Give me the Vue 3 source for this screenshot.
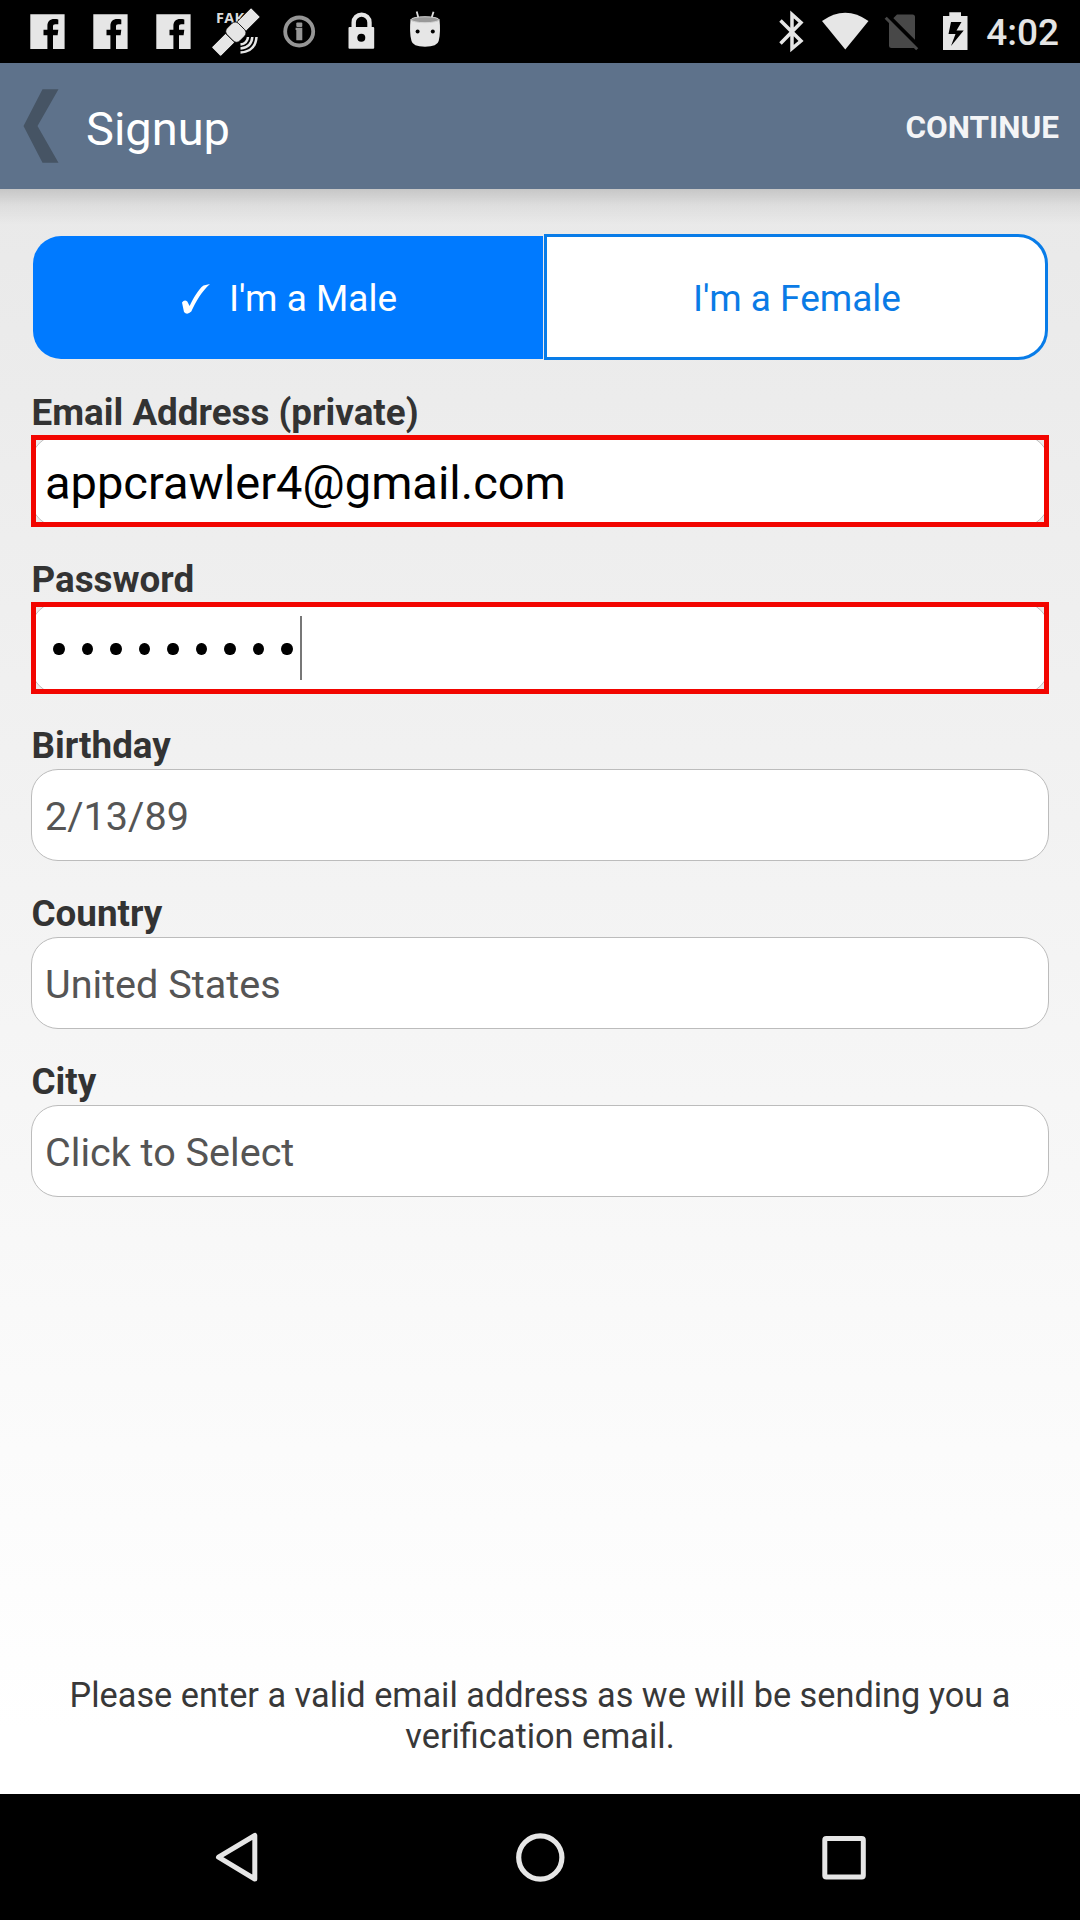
<script setup>
import { ref } from 'vue'

const gender = ref('male')
const email = ref('appcrawler4@gmail.com')
const passwordLength = ref(9)
const pickers = [
  { label: 'Birthday', value: '2/13/89' },
  { label: 'Country', value: 'United States' },
  { label: 'City', value: 'Click to Select' },
]
const facebookNotices = [16, 79, 142]
</script>

<template>
  <div class="screen">
    <div class="status">
      <div class="notices">
        <svg v-for="x in facebookNotices" :key="x" width="63" height="63" viewBox="16 0 63 63">
          <path fill="#e6e6e6" d="M30.3 14.3H64.6V49H53V35.2H57.6L58.3 29.8H53V26.6C53 24.9 53.6 24.2 55.4 24.2H58.3V19.4C57.2 19.2 55.8 19.1 54.2 19.1C50 19.1 47.4 21.5 47.4 26V29.8H43.5V35.2H47.4V49H30.3Z" />
        </svg>
        <svg width="63" height="63" viewBox="205 0 63 63">
          <text class="fake" x="216" y="23">FAKE</text>
          <g transform="translate(235.5 32.500) rotate(-45)" fill="#e6e6e6" stroke="#000" stroke-width="0.800">
            <rect x="-27.500" y="-6.500" width="20" height="13" rx="1" />
            <rect x="8" y="-6.500" width="20.500" height="13" rx="1" />
            <rect x="-7.500" y="-9" width="16" height="18" rx="4.500" />
          </g>
          <g fill="none" stroke="#e6e6e6" stroke-width="2.500">
            <path d="M240.500 44.500Q247.500 43.500 248 37" />
            <path d="M240.500 48.500Q251.500 47.500 252.300 37" />
            <path d="M240.500 52.500Q255.500 51.500 256.500 37" />
          </g>
        </svg>
        <svg width="63" height="63" viewBox="268 0 63 63">
          <circle cx="299.200" cy="31.500" r="14" fill="none" stroke="#969696" stroke-width="3.800" />
          <rect x="296.300" y="22.500" width="6" height="4.500" rx="1" fill="#969696" />
          <path fill="#969696" d="M295.600 27.800H302.300V40.300H296.300V30H295.600Z" />
        </svg>
        <svg width="63" height="63" viewBox="331 0 63 63">
          <path d="M353.700 29V22.500A7.900 7.900 0 0 1 369.500 22.500V29" fill="none" stroke="#e6e6e6" stroke-width="4.400" />
          <rect x="348.500" y="27" width="25.700" height="21.700" rx="1" fill="#e6e6e6" />
          <circle cx="361.300" cy="37.800" r="4" fill="#000" />
        </svg>
        <svg width="63" height="63" viewBox="394 0 63 63">
          <path d="M416.700 11.500L418.600 18.500M433.500 11.800L431.400 18.500" stroke="#e0e0e0" stroke-width="1.800" />
          <path fill="#e6e6e6" d="M410.500 19.500H439.500C440.300 27 440.300 35 438.700 41Q437.500 46.500 425 46.700Q412.600 46.500 411.500 41C409.800 35 409.800 27 410.500 19.500Z" />
          <ellipse cx="425" cy="19.700" rx="14" ry="3" fill="#999" stroke="#d4d4d4" stroke-width="1" />
          <circle cx="417.600" cy="31.500" r="2" fill="#000" />
          <circle cx="432.800" cy="31.500" r="2" fill="#000" />
        </svg>
      </div>
      <div class="system">
        <svg width="36" height="63" viewBox="774 0 36 63">
          <path d="M780.500 20.500L801 41L792 48.500V14.500L801 22.500L780.500 43.500" fill="none" stroke="#e6e6e6" stroke-width="3.500" />
        </svg>
        <svg width="63" height="63" viewBox="810 0 63 63">
          <path d="M822 21Q845.300 4.500 868.500 21L845.300 49.500Z" fill="#e6e6e6" />
        </svg>
        <svg width="57" height="63" viewBox="873 0 57 63">
          <path d="M889 22.500L897 14.500H912.500Q915 14.500 915 17V48H891.500Q889 48 889 45.500Z" fill="#484848" />
          <path d="M888.300 16L919.300 47" stroke="#000" stroke-width="4" />
          <path d="M885.700 17.800L917.200 49.300" stroke="#484848" stroke-width="3" />
        </svg>
        <svg width="45" height="63" viewBox="930 0 45 63">
          <path fill="#e6e6e6" fill-rule="evenodd" d="M949.300 12.300H961V16H967.500V50H943V16H949.300ZM951 22L948.500 34H955.500L951 46L963.700 30.500H956.500L961.500 22Z" />
        </svg>
        <span class="clock">4:02</span>
      </div>
    </div>

    <header class="bar">
      <svg class="back" width="38" height="80" viewBox="22 86 38 80">
        <path d="M42.500 89.300H58.500L37.500 126L58.500 162.700H42.500L23.500 126Z" fill="#465464" />
      </svg>
      <h1 class="title">Signup</h1>
      <span class="continue">CONTINUE</span>
    </header>

    <main class="content">
      <div class="segments">
        <div class="segment" :class="{ active: gender === 'male' }">
          <svg class="check" width="30" height="34" viewBox="0 0 30 34">
            <path d="M1 19.500Q3.500 16 6.300 18.500L8.600 23C12 16 17.500 6 22.500 2.500L29 1C21 8 14.500 19 10.300 28.500Q6 32.500 3 29Z" fill="#fff" />
          </svg>
          <span>I'm a Male</span>
        </div>
        <div class="segment" :class="{ active: gender === 'female' }"><span>I'm a Female</span></div>
      </div>

      <section class="field">
        <label class="label">Email Address (private)</label>
        <div class="invalid"><div class="inner"><span class="typed">{{ email }}</span></div></div>
      </section>
      <section class="field">
        <label class="label">Password</label>
        <div class="invalid">
          <div class="inner">
            <div class="dots"><i v-for="n in passwordLength" :key="n" class="dot"></i></div>
            <i class="caret"></i>
          </div>
        </div>
      </section>
      <section v-for="p in pickers" :key="p.label" class="field picker">
        <label class="label">{{ p.label }}</label>
        <div class="select">{{ p.value }}</div>
      </section>

      <p class="note">Please enter a valid email address as we will be sending you a<br>verification email.</p>
    </main>

    <nav class="nav">
      <svg width="304" height="126" viewBox="84 0 304 126">
        <path d="M254.800 41.500V85L218.500 63.200Z" fill="none" stroke="#e6e6e6" stroke-width="5" stroke-linejoin="round" />
      </svg>
      <svg width="304" height="126" viewBox="388 0 304 126">
        <circle cx="540.300" cy="63.500" r="21.600" fill="none" stroke="#e6e6e6" stroke-width="5.200" />
      </svg>
      <svg width="304" height="126" viewBox="692 0 304 126">
        <rect x="824.800" y="44.400" width="38.500" height="38.500" rx="1.500" fill="none" stroke="#e6e6e6" stroke-width="5" />
      </svg>
    </nav>
  </div>
</template>

<style>
body {
  margin: 0;
}
</style>

<style scoped>
.screen {
  width: 1080px;
  height: 1920px;
  display: flex;
  flex-direction: column;
  overflow: hidden;
  font-family: Roboto, "Liberation Sans", sans-serif;
}
svg {
  display: block;
  flex: none;
}
.status {
  height: 63px;
  background: #000;
  display: flex;
  justify-content: space-between;
  padding: 0 21px 0 16px;
}
.notices,
.system {
  display: flex;
}
.fake {
  font: bold 14.500px "Open Sans", sans-serif;
  letter-spacing: 0.3px;
  fill: #dcdcdc;
}
.clock {
  margin-left: 11px;
  font-size: 37px;
  font-weight: 500;
  line-height: 66px;
  color: #e4e4e4;
}
.bar {
  height: 126px;
  background: #5e728b;
  display: flex;
  align-items: center;
  padding: 0 21px 0 22px;
}
.title {
  margin: 4px 0 0 26px;
  font-size: 47px;
  font-weight: 400;
  color: #fff;
}
.continue {
  margin: 2px 0 0 auto;
  font-size: 31.500px;
  font-weight: 700;
  color: #f3f4f6;
}
.content {
  flex: 1;
  display: flex;
  flex-direction: column;
  padding: 45px 31px 0;
  background:
    linear-gradient(rgba(0, 0, 0, 0.15), rgba(0, 0, 0, 0.05) 45%, rgba(0, 0, 0, 0)) 0 0 / 100% 36px no-repeat,
    linear-gradient(#e9e9e9, #fff 96%);
}
.segments {
  display: flex;
  align-items: center;
  height: 126px;
  gap: 1px;
  padding: 0 1px 0 2px;
}
.segment {
  box-sizing: border-box;
  width: 504px;
  height: 126px;
  padding: 3px 0 0 2px;
  border: 3px solid #087ce8;
  border-radius: 0 30px 30px 0;
  background: #fff;
  display: flex;
  align-items: center;
  justify-content: center;
  font-size: 37px;
  color: #0a7be6;
}
.segment.active {
  width: 510px;
  height: 123px;
  border: 0;
  border-radius: 28px 0 0 28px;
  background: #007aff;
  color: #fff;
}
.check {
  margin: 2px 18px 0 0;
}
.field {
  display: flex;
  flex-direction: column;
  height: 167px;
}
.field.picker {
  height: 168px;
}
.label {
  height: 75px;
  box-sizing: border-box;
  padding: 31px 0 0 0.500px;
  line-height: 44px;
  font-size: 36.800px;
  font-weight: 700;
  color: #333;
}
.picker .label {
  padding-top: 30px;
}
.invalid {
  box-sizing: border-box;
  height: 92px;
  border: 5px solid #f20500;
  background: #ececec;
  overflow: hidden;
}
.inner {
  box-sizing: border-box;
  height: 92px;
  margin: -5px;
  padding-left: 13px;
  border: 1px solid #bdbdbd;
  border-radius: 27px;
  background: #fff;
  display: flex;
  align-items: center;
}
.typed {
  padding-top: 2px;
  font-size: 47px;
  color: #000;
}
.dots {
  display: flex;
  gap: 17.100px;
  margin-left: 8.300px;
  padding-top: 2px;
}
.dot {
  width: 11.400px;
  height: 12.800px;
  border-radius: 50%;
  background: #000;
}
.caret {
  width: 2px;
  height: 64px;
  margin-left: 7px;
  background: #777;
}
.select {
  box-sizing: border-box;
  height: 92px;
  padding: 2px 0 0 13px;
  border: 1px solid #bcbcbc;
  border-radius: 27px;
  background: #fff;
  display: flex;
  align-items: center;
  font-size: 39.600px;
  color: #555;
}
.note {
  margin: auto 0 38px;
  text-align: center;
  font-size: 34.300px;
  line-height: 40.500px;
  color: #383838;
}
.nav {
  height: 126px;
  background: #000;
  display: flex;
  justify-content: center;
}
</style>
